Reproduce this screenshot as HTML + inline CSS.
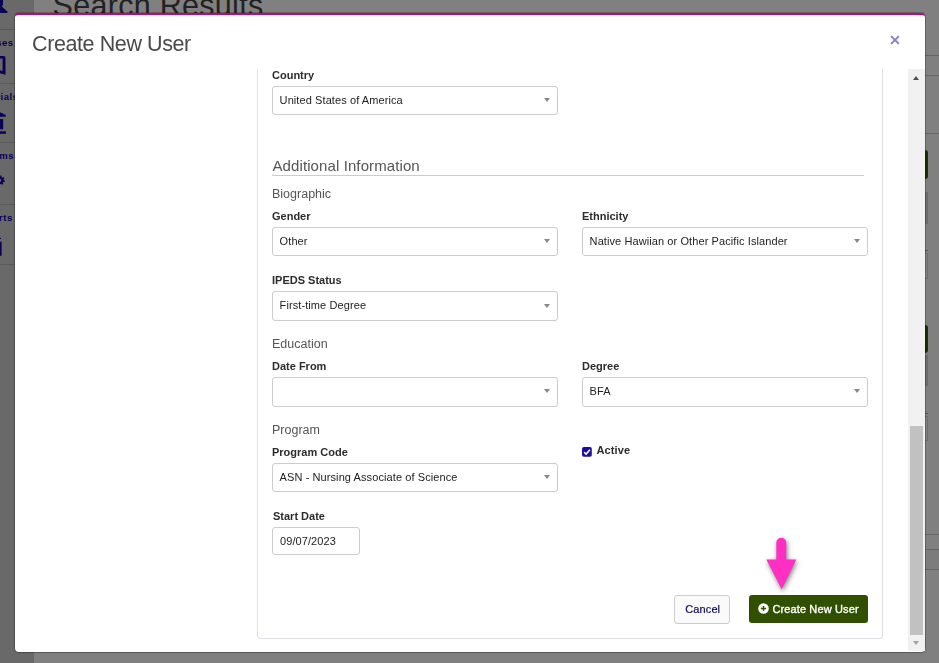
<!DOCTYPE html>
<html>
<head>
<meta charset="utf-8">
<title>Create New User</title>
<style>
  html, body { margin: 0; padding: 0; }
  body {
    width: 939px; height: 663px; overflow: hidden; position: relative;
    background: #808080;
    font-family: "Liberation Sans", sans-serif;
    font-size: 11px; color: #222;
  }
  .abs { position: absolute; }
  /* ---------- dimmed background page ---------- */
  #sidebar { left: 0; top: 0; width: 34px; height: 663px; background: #696969; }
  .sep { left: 0; width: 34px; height: 1px; background: #5a5a5a; }
  .navtxt { color: #0a0058; font-size: 9.5px; letter-spacing: 0.55px; white-space: nowrap; line-height: 12px; font-weight: bold; }
  #pagetitle { left: 52.5px; top: -15px; font-size: 30.5px; line-height: 40px; color: #222; white-space: nowrap; letter-spacing: 0.3px; }
  .bgline { height: 1px; background: #666; left: 925px; width: 14px; }
  .bggreen { left: 925px; width: 3.3px; background: #1b3000; border-radius: 0 3px 3px 0; }
  .bgdark { left: 925px; width: 3px; background: #6c6c6c; }
  /* ---------- modal ---------- */
  #modal {
    left: 15px; top: 13px; width: 910px; height: 639px; background: #fff;
    border-top: 2px solid #cc007b; box-sizing: border-box; border-radius: 4px;
    box-shadow: 0 0 0 1px rgba(0,0,0,0.22), 0 1px 2px rgba(0,0,0,0.12);
  }
  #mtitle { left: 32px; top: 30.4px; font-size: 21.5px; line-height: 28px; color: #4a4a4a; white-space: nowrap; letter-spacing: -0.4px; }
  #close { left: 889.1px; top: 34.3px; width: 12px; height: 12px; }
  #panel { left: 257px; top: 60px; width: 626px; height: 579px; border: 1px solid #dfe1e6; border-top: none; border-radius: 0 0 3px 3px; box-sizing: border-box; }
  #topmask { left: 16px; top: 56px; width: 892px; height: 13px; background: #fff; }
  /* scrollbar */
  #sbtrack { left: 908px; top: 69px; width: 17px; height: 582px; background: #f1f1f1; }
  #sbthumb { left: 910px; top: 426px; width: 13px; height: 209px; background: #c1c1c1; }
  .tri-up { width: 0; height: 0; border-left: 3.6px solid transparent; border-right: 3.6px solid transparent; border-bottom: 4px solid #505050; }
  .tri-dn { width: 0; height: 0; border-left: 3.6px solid transparent; border-right: 3.6px solid transparent; border-top: 4px solid #a3a3a3; }
  /* form */
  .lbl { font-weight: bold; font-size: 11px; line-height: 14px; color: #2c2c2c; white-space: nowrap; }
  .sec { font-size: 12.5px; line-height: 16px; color: #555; white-space: nowrap; }
  .sel { height: 29px; width: 286px; box-sizing: border-box; border: 1px solid #ccc; border-radius: 3px; background: #fff; }
  .sel span { position: absolute; left: 6.6px; top: 6px; font-size: 11px; line-height: 14px; color: #222; white-space: nowrap; letter-spacing: 0.09px; }
  .sel i { position: absolute; right: 7px; top: 11px; width: 0; height: 0; border-left: 3px solid transparent; border-right: 3px solid transparent; border-top: 4px solid #888; }
  #h2 { left: 272.5px; top: 156px; font-size: 15px; line-height: 20px; color: #555; white-space: nowrap; letter-spacing: 0.1px; }
  #hr { left: 272px; top: 175px; width: 592px; height: 1px; background: #ccc; }
  #cancel { left: 674px; top: 595px; width: 56px; height: 29px; box-sizing: border-box; border: 1px solid #ccc; border-radius: 3px; background: #fafafa; color: #0c0c64; text-align: center; line-height: 27px; font-size: 11px; letter-spacing: 0.1px; padding-left: 1.5px; -webkit-text-stroke: 0.2px #0c0c64; }
  #create { left: 749px; top: 595px; width: 119px; height: 28px; border-radius: 3px; background: #305000; color: #fff; font-size: 11px; line-height: 28px; white-space: nowrap; }
</style>
</head>
<body>
  <!-- dimmed page behind the modal -->
  <div id="sidebar" class="abs"></div>
  <div class="abs sep" style="top:29px"></div>
  <div class="abs sep" style="top:83px"></div>
  <div class="abs sep" style="top:142px"></div>
  <div class="abs sep" style="top:204px"></div>
  <div class="abs sep" style="top:264px"></div>
  <svg class="abs" style="left:0;top:0" width="34" height="270" viewBox="0 0 34 270">
    <g fill="#0a0055">
      <path d="M0 0 H3 V4.6 L1.8 6.6 L7.4 11.4 V13 H0 Z"/>
      <!-- book -->
      <path d="M0 55.9 H3.6 Q5.5 55.9 5.5 58 V74.8 L0 73.2 V70.2 L2.6 70.9 V58.6 H0 Z"/>
      <!-- bank -->
      <path d="M0 112.3 L5.7 114.9 V116.8 H0 Z"/>
      <rect x="0" y="119.1" width="3.2" height="10.2"/>
      <rect x="0" y="131.3" width="5.9" height="2.5"/>
      <!-- gear -->
      <path fill-rule="evenodd" d="M3.59 180.09 L4.90 180.49 L4.63 182.00 L3.26 181.92 L2.76 182.71 L3.40 183.92 L2.15 184.80 L1.23 183.78 L0.31 183.99 L-0.09 185.30 L-1.60 185.03 L-1.52 183.66 L-2.31 183.16 L-3.52 183.80 L-4.40 182.55 L-3.38 181.63 L-3.59 180.71 L-4.90 180.31 L-4.63 178.80 L-3.26 178.88 L-2.76 178.09 L-3.40 176.88 L-2.15 176.00 L-1.23 177.02 L-0.31 176.81 L0.09 175.50 L1.60 175.77 L1.52 177.14 L2.31 177.64 L3.52 177.00 L4.40 178.25 L3.38 179.17 Z M1.30 180.40 A1.30 1.30 0 1 0 -1.30 180.40 A1.30 1.30 0 1 0 1.30 180.40 Z"/>
      <!-- chart -->
      <rect x="0" y="241.7" width="1.6" height="14.1"/>
      <rect x="0" y="237.9" width="1" height="1.1"/>
    </g>
  </svg>
  <div class="abs navtxt" style="left:-50px; width:63.7px; text-align:right; top:37px;">rses</div>
  <div class="abs navtxt" style="left:-50px; width:68.5px; text-align:right; top:91px;">ncials</div>
  <div class="abs navtxt" style="left:-50px; width:64.2px; text-align:right; top:150px;">rams</div>
  <div class="abs navtxt" style="left:-50px; width:62.9px; text-align:right; top:211.6px;">ports</div>
  <div id="pagetitle" class="abs">Search Results</div>

  <div class="abs bgline" style="top:55px"></div>
  <div class="abs bgline" style="top:75px"></div>
  <div class="abs bgline" style="top:133px"></div>
  <div class="abs bggreen" style="top:150px;height:29px"></div>
  <div class="abs bgdark" style="top:192px;height:32px"></div>
  <div class="abs" style="left:925px;top:250px;width:3px;height:1px;background:#555"></div>
  <div class="abs" style="left:924px;top:253px;width:4px;height:26px;box-sizing:border-box;border:1px solid #6c6c6c;background:#828282"></div>
  <div class="abs bggreen" style="top:325px;height:28px"></div>
  <div class="abs bgdark" style="top:355px;height:31px"></div>
  <div class="abs" style="left:925px;top:413px;width:3px;height:1px;background:#555"></div>
  <div class="abs" style="left:924px;top:416px;width:4px;height:25px;box-sizing:border-box;border:1px solid #6c6c6c;background:#828282"></div>
  <div class="abs bgline" style="top:534px"></div>
  <div class="abs bgline" style="top:549px"></div>
  <div class="abs" style="left:925px;top:550px;width:14px;height:19px;background:#7c7c7c"></div>
  <div class="abs bgline" style="top:569px"></div>

  <!-- modal -->
  <div id="layer" class="abs" style="left:0;top:0;width:939px;height:663px;will-change:transform;">
  <div id="modal" class="abs"></div>
  <div id="mtitle" class="abs">Create New User</div>
  <svg id="close" class="abs" viewBox="0 0 12 12"><path d="M2.1 2.1 L9.9 9.9 M9.9 2.1 L2.1 9.9" stroke="#8a7fd0" stroke-width="2" fill="none"/></svg>

  <div id="panel" class="abs"></div>
  <div id="topmask" class="abs"></div>

  <!-- scrollbar -->
  <div id="sbtrack" class="abs"></div>
  <div id="sbthumb" class="abs"></div>
  <div class="abs tri-up" style="left:913.2px; top:76px;"></div>
  <div class="abs tri-dn" style="left:913.2px; top:641px;"></div>

  <!-- form -->
  <div class="abs lbl" style="left:272px; top:68px;">Country</div>
  <div class="abs sel" style="left:272px; top:86px;"><span>United States of America</span><i></i></div>

  <div id="h2" class="abs">Additional Information</div>
  <div id="hr" class="abs"></div>

  <div class="abs sec" style="left:272px; top:186px;">Biographic</div>
  <div class="abs lbl" style="left:272px; top:209px;">Gender</div>
  <div class="abs sel" style="left:272px; top:227px;"><span>Other</span><i></i></div>
  <div class="abs lbl" style="left:582px; top:209px;">Ethnicity</div>
  <div class="abs sel" style="left:582px; top:227px;"><span>Native Hawiian or Other Pacific Islander</span><i></i></div>

  <div class="abs lbl" style="left:272px; top:273px;">IPEDS Status</div>
  <div class="abs sel" style="left:272px; top:291px; height:30px;"><span>First-time Degree</span><i style="top:12px"></i></div>

  <div class="abs sec" style="left:272px; top:336px;">Education</div>
  <div class="abs lbl" style="left:272px; top:359px;">Date From</div>
  <div class="abs sel" style="left:272px; top:377px; height:30px;"><span></span><i></i></div>
  <div class="abs lbl" style="left:582px; top:359px;">Degree</div>
  <div class="abs sel" style="left:582px; top:377px; height:30px;"><span>BFA</span><i></i></div>

  <div class="abs sec" style="left:272px; top:422px;">Program</div>
  <div class="abs lbl" style="left:272px; top:445px;">Program Code</div>
  <div class="abs sel" style="left:272px; top:463px;"><span>ASN - Nursing Associate of Science</span><i></i></div>

  <!-- checkbox -->
  <svg class="abs" style="left:582px; top:447px;" width="10" height="10" viewBox="0 0 10 10">
    <rect x="0" y="0" width="9.8" height="9.8" rx="1.8" fill="#1b0fa0"/>
    <path d="M2.1 5.2 L4.1 7.1 L7.9 2.7" stroke="#fff" stroke-width="1.5" fill="none"/>
  </svg>
  <div class="abs lbl" style="left:596.5px; top:443px; letter-spacing:0.1px;">Active</div>

  <div class="abs lbl" style="left:273px; top:509px;">Start Date</div>
  <div class="abs sel" style="left:272px; top:527px; width:88px; height:28px;"><span style="left:7px">09/07/2023</span></div>

  <!-- arrow annotation -->
  <svg class="abs" style="left:756px; top:530.3px; filter: drop-shadow(1px 2px 2.5px rgba(0,0,0,0.5));" width="50" height="66" viewBox="0 0 50 66">
    <path d="M20.3 12.8 A5 5 0 0 1 30.3 12.8 V29.5 H40.3 L25.7 59.5 L10.3 29.5 H20.3 Z" fill="#fe30c4"/>
  </svg>

  <!-- buttons -->
  <div id="cancel" class="abs">Cancel</div>
  <div id="create" class="abs">
    <svg class="abs" style="left:9px; top:8px;" width="11" height="11" viewBox="0 0 11 11">
      <circle cx="5.5" cy="5.5" r="5.3" fill="#fff"/>
      <path d="M5.5 2.9 V8.1 M2.9 5.5 H8.1" stroke="#305000" stroke-width="1.4"/>
    </svg>
    <span class="abs" style="left:23.4px; top:0; letter-spacing:0.13px; -webkit-text-stroke:0.35px #fff;">Create New User</span>
  </div>
  </div>
</body>
</html>
